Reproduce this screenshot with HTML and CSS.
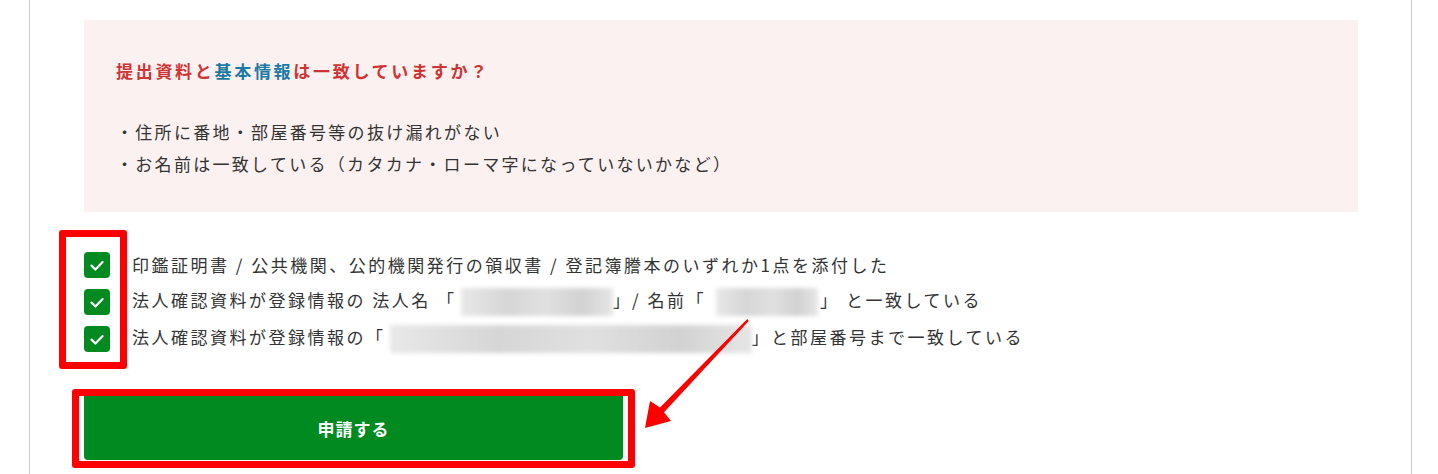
FILE: index.html
```html
<!DOCTYPE html>
<html lang="ja">
<head>
  <meta charset="UTF-8">
  <title>申請内容の確認</title>
  <link rel="stylesheet" href="styles.css">
</head>
<body>
  <div class="pagina">
    <!-- Recuadro de aviso -->
    <div class="aviso">
      <p class="aviso-titulo"><span class="rojo">提出資料と</span><span class="azul">基本情報</span><span class="rojo">は一致していますか？</span></p>
      <ul class="aviso-lista">
        <li>・住所に番地・部屋番号等の抜け漏れがない</li>
        <li>・お名前は一致している（カタカナ・ローマ字になっていないかなど）</li>
      </ul>
    </div>

    <!-- Lista de comprobación -->
    <div class="comprobaciones">
      <label class="fila">
        <span class="casilla"><svg viewBox="0 0 26 26"><path d="M7.5 13.6l3.9 3.9 7.2-7.4"/></svg></span>
        <span class="texto">印鑑証明書 / 公共機関、公的機関発行の領収書 / 登記簿謄本のいずれか1点を添付した</span>
      </label>
      <label class="fila">
        <span class="casilla"><svg viewBox="0 0 26 26"><path d="M7.5 13.6l3.9 3.9 7.2-7.4"/></svg></span>
        <span class="texto">法人確認資料が登録情報の 法人名 「<span class="oculto oculto-nombre"></span>」/ 名前「<span class="oculto oculto-persona"></span>」 と一致している</span>
      </label>
      <label class="fila">
        <span class="casilla"><svg viewBox="0 0 26 26"><path d="M7.5 13.6l3.9 3.9 7.2-7.4"/></svg></span>
        <span class="texto">法人確認資料が登録情報の「<span class="oculto oculto-direccion"></span>」と部屋番号まで一致している</span>
      </label>
    </div>

    <button class="enviar">申請する</button>

    <!-- Marcas rojas de la captura -->
    <div class="marca marca-casillas"></div>
    <div class="marca marca-boton"></div>
    <svg class="flecha" viewBox="0 0 160 130">
      <polygon points="117.3,9.1 30,97.5 20,91 15,118 41,111 34,102.3 118.7,10.9"/>
    </svg>
  </div>
</body>
</html>
```

FILE: styles.css
```css
:root {
  --verde: #008a20;
  --rojo-marca: #ff0000;
  --texto: #333333;
  --fondo-aviso: #fcf1f1;
  --borde: #cccccc;
}
body {
  margin: 0;
  font-family: "Noto Sans CJK JP", "Noto Sans", sans-serif;
  color: var(--texto);
  background: #ffffff;
}
.pagina {
  position: relative;
  margin-left: 29px;
  width: 1383px;
  height: 474px;
  box-sizing: border-box;
  border-left: 1px solid var(--borde);
  border-right: 1px solid var(--borde);
  padding: 20px 53px 0 54px;
  overflow: hidden;
}
/* Recuadro rosa */
.aviso {
  background: var(--fondo-aviso);
  padding: 35px 32px 32px 32px;
}
.aviso-titulo {
  margin: 0 0 29px 0;
  font-size: 17px;
  line-height: 32px;
  font-weight: bold;
  letter-spacing: 2.7px;
}
.rojo {
  color: #d03333;
}
.azul {
  color: #1b7aa3;
}
.aviso-lista {
  list-style: none;
  margin: 0;
  padding: 0;
  font-size: 17px;
  line-height: 32px;
  letter-spacing: 2.3px;
}
/* Casillas */
.comprobaciones {
  margin-top: 34px;
}
.fila {
  display: flex;
  align-items: center;
  gap: 22px;
  height: 37px;
  font-size: 17px;
  letter-spacing: 2.5px;
}
.casilla {
  width: 26px;
  height: 26px;
  border-radius: 4px;
  background: var(--verde);
  flex-shrink: 0;
}
.casilla svg {
  display: block;
  width: 26px;
  height: 26px;
}
.casilla path {
  fill: none;
  stroke: #ffffff;
  stroke-width: 2.2;
  stroke-linecap: round;
  stroke-linejoin: round;
}
.texto {
  white-space: nowrap;
}
.oculto {
  display: inline-block;
  height: 28px;
  vertical-align: middle;
  filter: blur(2px);
  background: linear-gradient(90deg, #e8e8e8, #d6d6d6 30%, #e0e0e0 55%, #d2d2d2 80%, #e6e6e6);
}
.oculto-nombre {
  width: 152px;
  margin-left: 4px;
}
.oculto-persona {
  width: 102px;
  margin: 0 2px 0 10px;
}
.oculto-direccion {
  width: 362px;
  margin-left: 4px;
}
/* Botón principal */
.enviar {
  display: block;
  margin-top: 32px;
  width: 539px;
  height: 71px;
  padding-top: 8px;
  border: none;
  border-radius: 4px;
  background: var(--verde);
  color: #ffffff;
  font-family: inherit;
  font-size: 17px;
  font-weight: bold;
  letter-spacing: 1px;
  cursor: pointer;
}
/* Marcas superpuestas */
.marca {
  position: absolute;
  box-sizing: border-box;
  border: 7px solid var(--rojo-marca);
  border-radius: 3px;
}
.marca-casillas {
  left: 29px;
  top: 230px;
  width: 68px;
  height: 139px;
}
.marca-boton {
  left: 42px;
  top: 389px;
  width: 563px;
  height: 79px;
}
.flecha {
  position: absolute;
  left: 600px;
  top: 310px;
  width: 160px;
  height: 130px;
}
.flecha polygon {
  fill: var(--rojo-marca);
}
```
